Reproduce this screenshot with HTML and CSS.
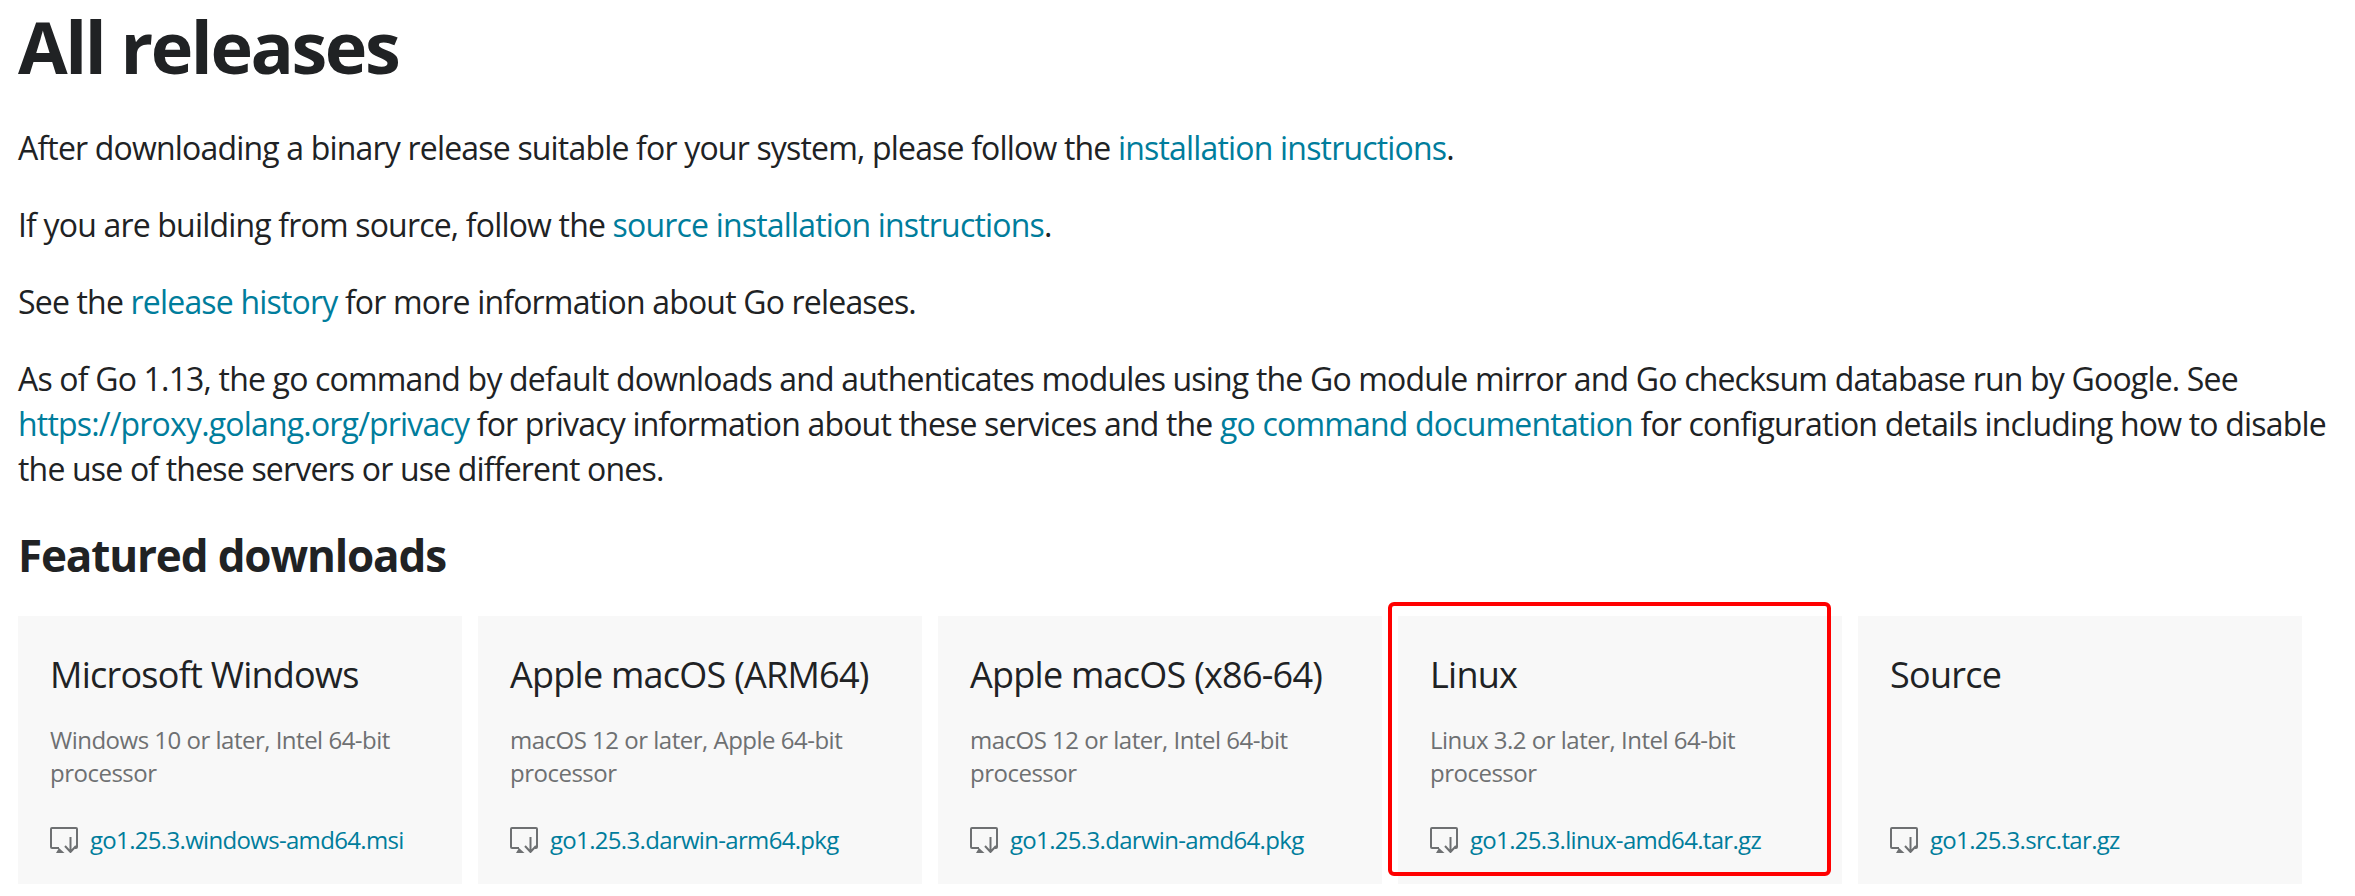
FILE: index.html
```html
<!DOCTYPE html>
<html lang="en">
<head>
<meta charset="utf-8">
<title>All releases</title>
<link rel="stylesheet" href="styles.css">
</head>
<body>
<svg class="defs" width="0" height="0" aria-hidden="true">
  <symbol id="dl" viewBox="0 0 28 26">
    <path d="M9 21H2a1 1 0 0 1-1-1V2a1 1 0 0 1 1-1h24a1 1 0 0 1 1 1v18a1 1 0 0 1-1 1h-1" fill="none" stroke="currentColor" stroke-width="2"/>
    <path d="M6 26l3-5 5.500 5z" fill="currentColor"/>
    <path d="M20.500 10v14M15 19l5.500 6 5.500-6" fill="none" stroke="currentColor" stroke-width="2"/>
  </symbol>
</svg>
<main class="page">
  <h1 class="title">All releases</h1>
  <p class="para">After downloading a binary release suitable for your system, please follow the <a href="#">installation instructions</a>.</p>
  <p class="para">If you are building from source, follow the <a href="#">source installation instructions</a>.</p>
  <p class="para">See the <a href="#">release history</a> for more information about Go releases.</p>
  <p class="para">As of Go 1.13, the go command by default downloads and authenticates modules using the Go module mirror and Go checksum database run by Google. See<br><a href="#">https://proxy.golang.org/privacy</a> for privacy information about these services and the <a href="#">go command documentation</a> for configuration details including how to disable<br>the use of these servers or use different ones.</p>
  <h2 class="subtitle">Featured downloads</h2>
  <div class="cards">
    <section class="card">
      <h3 class="card-name">Microsoft Windows</h3>
      <p class="card-desc">Windows 10 or later, Intel 64-bit processor</p>
      <a class="card-file" href="#"><svg class="dl-icon"><use href="#dl"/></svg>go1.25.3.windows-amd64.msi</a>
    </section>
    <section class="card">
      <h3 class="card-name">Apple macOS (ARM64)</h3>
      <p class="card-desc">macOS 12 or later, Apple 64-bit processor</p>
      <a class="card-file" href="#"><svg class="dl-icon"><use href="#dl"/></svg>go1.25.3.darwin-arm64.pkg</a>
    </section>
    <section class="card">
      <h3 class="card-name">Apple macOS (x86-64)</h3>
      <p class="card-desc">macOS 12 or later, Intel 64-bit processor</p>
      <a class="card-file" href="#"><svg class="dl-icon"><use href="#dl"/></svg>go1.25.3.darwin-amd64.pkg</a>
    </section>
    <section class="card">
      <div class="highlight"></div>
      <h3 class="card-name">Linux</h3>
      <p class="card-desc">Linux 3.2 or later, Intel 64-bit processor</p>
      <a class="card-file" href="#"><svg class="dl-icon"><use href="#dl"/></svg>go1.25.3.linux-amd64.tar.gz</a>
    </section>
    <section class="card">
      <h3 class="card-name">Source</h3>
      <p class="card-desc"></p>
      <a class="card-file" href="#"><svg class="dl-icon"><use href="#dl"/></svg>go1.25.3.src.tar.gz</a>
    </section>
  </div>
</main>
</body>
</html>
```
FILE: styles.css
```css
html, body {
  margin: 0;
  padding: 0;
  background: #fff;
}
body {
  height: 896px;
  overflow: hidden;
  font-family: "Open Sans", "Noto Sans", sans-serif;
  color: #202224;
}
.defs {
  position: absolute;
}
.page {
  padding: 0 0 0 18px;
  width: 2330px;
}
a {
  color: #007d9c;
  text-decoration: none;
}
.title {
  margin: 0;
  height: 93px;
  font-size: 72px;
  line-height: 93px;
  font-weight: 700;
  letter-spacing: -2.45px;
}
.para {
  margin: 32px 0 0;
  font-size: 32px;
  line-height: 45px;
  letter-spacing: -0.82px;
}
.subtitle {
  margin: 34px 0 0;
  font-size: 44px;
  line-height: 60px;
  font-weight: 700;
  letter-spacing: -1.15px;
}
.cards {
  display: flex;
  gap: 16px;
  margin-top: 31px;
}
.card {
  position: relative;
  box-sizing: border-box;
  width: 444px;
  height: 268px;
  padding: 32px 32px 0;
  background: #f8f8f8;
  display: flex;
  flex-direction: column;
}
.card-name {
  margin: 0;
  font-size: 36px;
  line-height: 54px;
  font-weight: 400;
  letter-spacing: -0.75px;
}
.card-desc {
  margin: 21px 0 0;
  height: 66px;
  font-size: 24px;
  line-height: 33px;
  color: #6e7072;
  letter-spacing: -0.5px;
}
.card-file {
  margin-top: 33px;
  display: flex;
  align-items: center;
  gap: 12px;
  font-size: 24px;
  line-height: 36px;
  letter-spacing: -0.68px;
}
.dl-icon {
  width: 28px;
  height: 26px;
  flex: none;
  color: #6e7072;
}
.highlight {
  position: absolute;
  left: -10px;
  top: -14px;
  width: 443px;
  height: 274px;
  box-sizing: border-box;
  border: 4px solid #ff0000;
  border-radius: 6px;
}
```
